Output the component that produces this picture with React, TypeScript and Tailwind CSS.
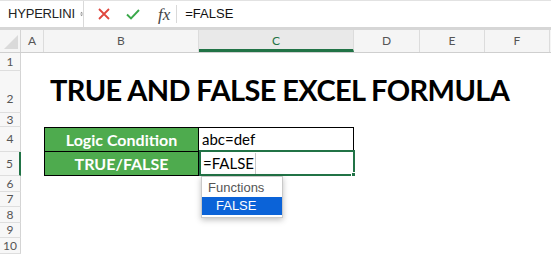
import React from 'react';

const cols = [
  { key: 'A', w: 'w-[23px]' },
  { key: 'B', w: 'w-[155px]' },
  { key: 'C', w: 'w-[155px]' },
  { key: 'D', w: 'w-[66px]' },
  { key: 'E', w: 'w-[65px]' },
  { key: 'F', w: 'w-[65px]' },
];

const uiFont = "font-['Liberation_Sans',Arial,sans-serif]";
const cellFont = "font-['Lato','Open_Sans',sans-serif]";

function RowHead({ n, h, active = false, end = false }: { n: number; h: string; active?: boolean; end?: boolean }) {
  return (
    <div
      className={`w-[21px] ${h} shrink-0 flex justify-center ${end ? 'items-end pb-[7px]' : 'items-center'} bg-[#f7f7f7] border-b border-[#dedede] text-[12px] leading-none text-[#555] ${cellFont} ${
        active ? 'border-r-2 border-r-[#217346]' : 'border-r border-r-[#d4d4d4]'
      }`}
    >
      {n}
    </div>
  );
}

function FormulaBar() {
  return (
    <div className={`h-[30px] flex items-center bg-white border-t border-[#e2e2e2] border-b-[3px] border-b-[#d6d6d6] ${uiFont}`}>
      <div className="w-[84px] h-full flex items-center pl-[8px] border-r border-[#d9d9d9]">
        <span className="text-[13px] text-[#222] tracking-[-0.2px]">HYPERLINI</span>
        <svg width="8" height="14" viewBox="0 0 8 14" className="ml-[5px]">
          <path d="M4 1 L7.5 5.5 H0.5 Z" fill="#8a8a8a" />
          <path d="M4 13 L7.5 8.5 H0.5 Z" fill="#8a8a8a" />
        </svg>
      </div>
      <div className="flex items-center h-full">
        <svg width="12" height="12" viewBox="0 0 12 12" className="ml-[14px]">
          <path d="M1 1 L11 11 M11 1 L1 11" stroke="#e0463d" strokeWidth="1.8" />
        </svg>
        <svg width="14" height="11" viewBox="0 0 14 11" className="ml-[16px]">
          <path d="M1 5.5 L5 9.5 L13 1" fill="none" stroke="#3aa84a" strokeWidth="1.9" />
        </svg>
        <span className="ml-[18px] text-[17px] italic text-[#444] font-['Liberation_Serif',serif] leading-none">fx</span>
        <div className="ml-[6px] w-px h-[18px] bg-[#d9d9d9]" />
        <span className="ml-[8px] text-[13px] text-[#111]">=FALSE</span>
      </div>
    </div>
  );
}

function HeaderRow() {
  return (
    <div className={`flex h-[23px] bg-[#f5f5f5] border-b border-[#cfcfcf] text-[12px] text-[#555] ${cellFont}`}>
      <div className="w-[21px] shrink-0 border-r border-[#d4d4d4] relative overflow-hidden">
        <svg width="14" height="14" viewBox="0 0 14 14" className="absolute right-[2px] bottom-[3px]">
          <path d="M14 0 L14 14 L0 14 Z" fill="#dadada" />
        </svg>
      </div>
      {cols.map((c) => (
        <div
          key={c.key}
          className={`${c.w} shrink-0 flex items-center justify-center border-r border-[#dcdcdc] ${
            c.key === 'C' ? 'bg-[#e9e9e9] text-[#217346] border-b-[3px] border-b-[#217346] pt-[3px]' : ''
          }`}
        >
          {c.key}
        </div>
      ))}
    </div>
  );
}

export default function App() {
  const small = ['h-[16px]', 'h-[15px]', 'h-[16px]', 'h-[15px]', 'h-[16px]'];
  return (
    <div className="w-[551px] h-[257px] overflow-hidden bg-white relative">
      <FormulaBar />
      <HeaderRow />

      <div className="flex">
        <RowHead n={1} h="h-[18px]" />
      </div>

      <div className="flex h-[42px]">
        <RowHead n={2} h="h-[42px]" end />
        <div className="flex items-end pb-[9px] pl-[29px] whitespace-nowrap">
          <span className={`text-[29px] font-bold text-black leading-none tracking-[-0.6px] ${cellFont}`}>
            TRUE AND FALSE EXCEL FORMULA
          </span>
        </div>
      </div>

      <div className="flex">
        <RowHead n={3} h="h-[14px]" />
      </div>

      <div className="flex">
        <RowHead n={4} h="h-[25px]" />
        <div className="w-[23px]" />
        <div className={`w-[155px] h-[25px] bg-[#4eab4e] border border-black flex items-center justify-center text-white font-bold text-[16px] ${cellFont}`}>
          Logic Condition
        </div>
        <div className={`w-[155px] h-[25px] border-y border-r border-black flex items-center pl-[3px] text-[15px] text-black ${cellFont}`}>
          abc=def
        </div>
      </div>

      <div className="flex">
        <RowHead n={5} h="h-[24px]" active />
        <div className="w-[23px]" />
        <div className={`w-[155px] h-[24px] bg-[#4eab4e] border-x border-b border-black flex items-center justify-center text-white font-bold text-[16px] ${cellFont}`}>
          TRUE/FALSE
        </div>
        <div className="relative w-[156px] h-[26px] -mt-[2px] border-2 border-[#217346] flex items-center pl-[2px]">
          <span className={`text-[15px] text-black ${cellFont}`}>=FALSE</span>
          <div className="ml-[1px] w-px h-[21px] bg-[#c8c8c8]" />
          <div className="absolute -right-[3px] -bottom-[3px] w-[5px] h-[5px] bg-[#217346] border border-white" />
          <div className={`absolute left-0 top-[24px] w-[82px] bg-white border border-[#c9c9c9] shadow-[0_2px_6px_rgba(0,0,0,0.25)] pt-[2px] pb-[2px] z-10 ${uiFont}`}>
            <div className="h-[18px] pl-[6px] flex items-center text-[13px] text-[#555]">Functions</div>
            <div className="h-[18px] pl-[14px] flex items-center text-[13px] text-white bg-[#0b63d8]">FALSE</div>
          </div>
        </div>
      </div>

      {[6, 7, 8, 9, 10].map((n, i) => (
        <div className="flex" key={n}>
          <RowHead n={n} h={small[i]} />
        </div>
      ))}
    </div>
  );
}
